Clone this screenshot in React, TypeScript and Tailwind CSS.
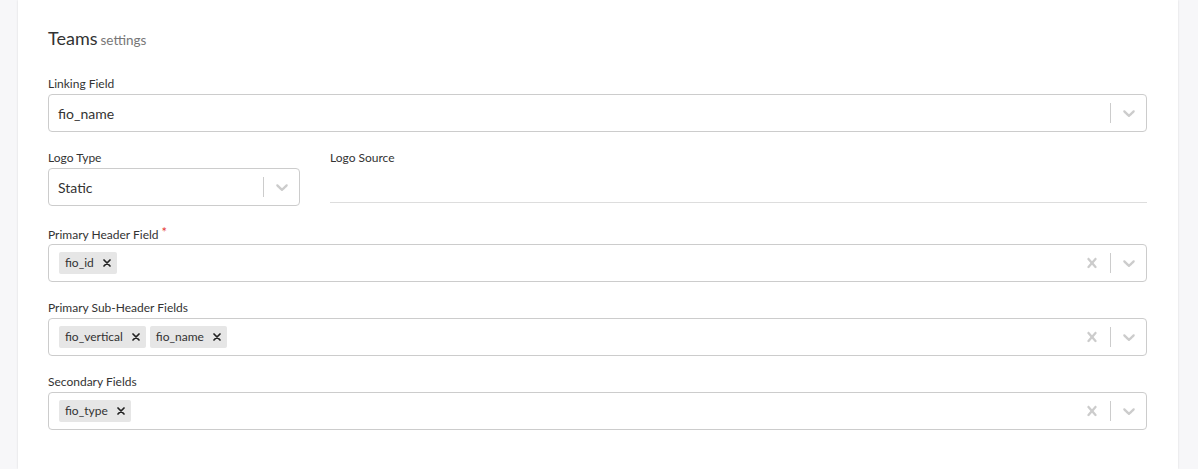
import React from "react";

const Chevron = () => (
  <svg width="20" height="20" viewBox="0 0 20 20" className="text-[#cccccc]" fill="currentColor">
    <path d="M4.516 7.548c0.436-0.446 1.043-0.481 1.576 0l3.908 3.747 3.908-3.747c0.533-0.481 1.141-0.446 1.574 0 0.436 0.445 0.408 1.197 0 1.615-0.406 0.418-4.695 4.502-4.695 4.502-0.217 0.223-0.502 0.335-0.787 0.335s-0.57-0.112-0.789-0.335c0 0-4.287-4.084-4.695-4.502s-0.436-1.17 0-1.615z" />
  </svg>
);

const Cross = () => (
  <svg width="20" height="20" viewBox="0 0 20 20" className="text-[#cccccc]" fill="currentColor">
    <path d="M14.348 14.849c-0.469 0.469-1.229 0.469-1.697 0l-2.651-3.030-2.651 3.029c-0.469 0.469-1.229 0.469-1.697 0-0.469-0.469-0.469-1.229 0-1.697l2.758-3.15-2.759-3.152c-0.469-0.469-0.469-1.228 0-1.697s1.228-0.469 1.697 0l2.652 3.031 2.651-3.031c0.469-0.469 1.228-0.469 1.697 0s0.469 1.229 0 1.697l-2.758 3.152 2.758 3.15c0.469 0.469 0.469 1.229 0 1.698z" />
  </svg>
);

const Indicators = ({ clear }: { clear?: boolean }) => (
  <div className="flex items-center self-stretch shrink-0">
    {clear && (
      <div className="px-2 flex items-center">
        <Cross />
      </div>
    )}
    <span className="w-px self-stretch my-2 bg-[#cccccc]" />
    <div className="pl-2 pr-[7px] flex items-center">
      <Chevron />
    </div>
  </div>
);

const ChipX = () => (
  <svg width="8" height="8" viewBox="0 0 8 8" className="text-[#222222]">
    <path d="M1 1 L7 7 M7 1 L1 7" stroke="currentColor" strokeWidth="1.7" strokeLinecap="round" />
  </svg>
);

const Chip = ({ label }: { label: string }) => (
  <div className="flex items-center h-[22px] bg-[#e6e6e6] rounded-[2px] mr-[4px]">
    <span className="text-[12px] text-[#333333] pl-[6px] pr-[3px]">{label}</span>
    <span className="px-[6px] flex items-center">
      <ChipX />
    </span>
  </div>
);

const Label = ({ children, required }: { children: React.ReactNode; required?: boolean }) => (
  <div className="text-[12px] leading-[16px] text-[#333333] mb-[2px] h-[16px]">
    {children}
    {required && <span className="text-[#e53935] ml-[3px] relative top-[-2px] text-[13px]">*</span>}
  </div>
);

const SingleSelect = ({ value }: { value: string }) => (
  <div className="flex items-center h-[38px] border border-[#cccccc] rounded-[4px] bg-white">
    <div className="flex-1 px-[9px] text-[14px] text-[#333333]">{value}</div>
    <Indicators />
  </div>
);

const MultiSelect = ({ values }: { values: string[] }) => (
  <div className="flex items-center h-[38px] border border-[#cccccc] rounded-[4px] bg-white">
    <div className="flex-1 flex items-center px-[10px]">
      {values.map((v) => (
        <Chip key={v} label={v} />
      ))}
    </div>
    <Indicators clear />
  </div>
);

export default function App() {
  return (
    <div
      className="w-[1198px] h-[469px] bg-[#f7f7f9] flex overflow-hidden"
      style={{ fontFamily: "Lato, 'Noto Sans', sans-serif" }}
    >
      <div className="ml-[18px] w-[1160px] h-full bg-white shadow-[0_0_2px_rgba(0,0,0,0.12)] pl-[30px] pr-[31px] pt-[25px]">
        <div className="flex items-baseline h-[22px] mb-[29px]">
          <span className="text-[18px] text-[#333333]">Teams</span>
          <span className="text-[13.5px] text-[#777777] ml-[3px]">settings</span>
        </div>

        <div>
          <Label>Linking Field</Label>
          <SingleSelect value="fio_name" />

          <div className="flex mt-[18px] h-[56px]">
            <div className="w-[252px]">
              <Label>Logo Type</Label>
              <SingleSelect value="Static" />
            </div>
            <div className="flex-1 ml-[30px] flex flex-col">
              <Label>Logo Source</Label>
              <div className="h-[35px] border-b border-[#dddddd]" />
            </div>
          </div>

          <div className="mt-[20px]">
            <Label required>Primary Header Field</Label>
            <MultiSelect values={["fio_id"]} />
          </div>

          <div className="mt-[18px]">
            <Label>Primary Sub-Header Fields</Label>
            <MultiSelect values={["fio_vertical", "fio_name"]} />
          </div>

          <div className="mt-[18px]">
            <Label>Secondary Fields</Label>
            <MultiSelect values={["fio_type"]} />
          </div>
        </div>
      </div>
    </div>
  );
}
